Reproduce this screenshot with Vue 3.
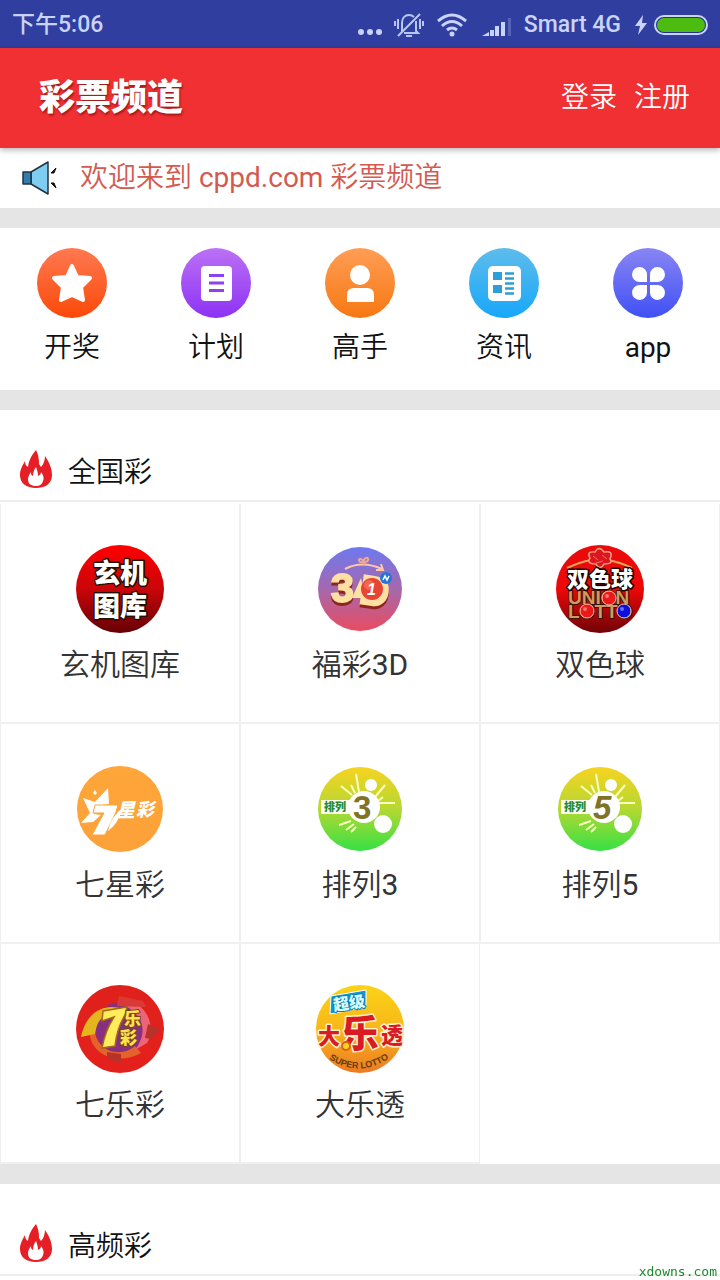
<template>
  <div class="page">
    <div class="status-bar">
      <span>下午5:06</span>
      <div class="status-right">
        <svg width="24" height="24" viewBox="0 0 24 24" fill="#c9d3fb">
          <circle cx="3" cy="19" r="3" /><circle cx="12" cy="19" r="3" /><circle cx="21" cy="19" r="3" />
        </svg>
        <svg class="bell" width="30" height="26" viewBox="0 0 30 26" fill="none" stroke="#b9c6f5" stroke-width="2">
          <path d="M8 20V11C8 6 11 3 15 3C17 3 19 4 20 5M22 9V19L24 21H10M12 24H18" />
          <path d="M4 24L26 2M1 9V14M4 7V17M26 7V17M29 9V14" />
        </svg>
        <svg class="wifi" width="32" height="24" viewBox="0 0 32 24" fill="none" stroke="#c9d3fb" stroke-width="3">
          <path d="M2 8Q16 -4 30 8M6 13Q16 4 26 13M11 17Q16 13 21 17" />
          <circle cx="16" cy="21" r="2.500" fill="#c9d3fb" stroke="none" />
        </svg>
        <svg class="signal" width="30" height="20" viewBox="0 0 30 20" fill="#c9d3fb">
          <path d="M0 19L7 15V19ZM8 13H12V19H8ZM13 9H17V19H13ZM19 5H23V19H19Z" />
          <path d="M26 1H29V19H26Z" fill="#5663b8" />
        </svg>
        <span>Smart 4G</span>
        <svg class="bolt" width="12" height="20" viewBox="0 0 12 20" fill="#c9d3fb">
          <path d="M8 0L0 11H5L3 20L12 8H7Z" />
        </svg>
        <svg width="54" height="20" viewBox="0 0 54 20">
          <rect x="1" y="1" width="52" height="18" rx="9" fill="#23308c" stroke="#c9d3fb" stroke-width="2" />
          <rect x="3" y="3" width="48" height="14" rx="7" fill="#4cbc10" />
        </svg>
      </div>
    </div>

    <header class="header">
      <h1>彩票频道</h1>
      <div class="user-links">
        <a href="#login">登录</a>
        <a href="#register">注册</a>
      </div>
    </header>

    <div class="notice">
      <svg width="38" height="36" viewBox="0 0 38 36" stroke="#24343d" stroke-width="1.5" stroke-linejoin="round">
        <path d="M10 12L27 2V34L10 24Z" fill="#7fcdf0" />
        <rect x="2" y="12" width="8" height="12" fill="#2f7fae" />
        <path d="M30 13L35 8L33 13ZM30 23L35 28L33 23Z" fill="#111" stroke="#111" stroke-width="1" />
      </svg>
      <p>欢迎来到 cppd.com 彩票频道</p>
    </div>

    <nav class="quick-nav">
      <a v-for="item in menu" :key="item.id" :href="'#' + item.id">
        <svg width="70" height="70" viewBox="0 0 70 70">
          <defs>
            <linearGradient :id="'menu-' + item.id" x1="0" y1="0" x2="0" y2="1">
              <stop offset="0" :stop-color="item.from" />
              <stop offset="1" :stop-color="item.to" />
            </linearGradient>
          </defs>
          <circle cx="35" cy="35" r="35" :fill="`url(#menu-${item.id})`" />
          <path v-if="item.id === 'draw'" d="M35 18L40 29L53 30L44 39L46 52L35 47L24 52L26 39L17 30L30 29Z" fill="#fff" stroke="#fff" stroke-width="4" stroke-linejoin="round" />
          <g v-else-if="item.id === 'plan'">
            <rect x="20" y="18" width="31" height="35" rx="4" fill="#fff" />
            <path d="M28 27.500H43M28 35H43M28 42.500H43" stroke="#8e41ee" stroke-width="3" />
          </g>
          <g v-else-if="item.id === 'expert'" fill="#fff">
            <circle cx="35" cy="27" r="10" />
            <path d="M22 54V47Q22 40 29 40H42Q49 40 49 47V54Z" />
          </g>
          <g v-else-if="item.id === 'news'">
            <rect x="19" y="18" width="33" height="35" rx="5" fill="#fff" />
            <path d="M24 24H33V32H24ZM24 37H33V45H24Z" fill="#2b9fd8" />
            <path d="M36 25.500H45M36 30.500H45M36 35.500H45M36 40.500H45M36 45.500H45" stroke="#2b9fd8" stroke-width="2.500" />
          </g>
          <g v-else fill="#fff">
            <path d="M34 34H26A7.500 7.500 0 1 1 34 26.500ZM37 34V26.500A7.500 7.500 0 1 1 45 34ZM34 37V45A7.500 7.500 0 1 1 26 37ZM37 37H45A7.500 7.500 0 1 1 37 45Z" />
          </g>
        </svg>
        <span>{{ item.name }}</span>
      </a>
    </nav>

    <section v-for="section in sections" :key="section.title" class="section">
      <h2>
        <svg width="34" height="40" viewBox="0 0 34 40">
          <path d="M17 0C19 4 20 8 20 14L22 17C25 14 26 9 26 6C30 12 33 18 33 25C33 34 26 38 17 38C7 38 1 33 1 25C1 19 4 15 6 11C6 14 7 16 9 17C10 10 12 6 17 0Z" fill="#e51f25" />
          <path d="M17 17C18 20 19 22 19 26C21 25 22 24 22 22C25 26 25 29 24 31C23 35 20 36 17 36C12 36 9 34 9 29C9 27 10 25 12 22C12 24 12 25 14 26C14 22 15 20 17 17Z" fill="#fff" />
        </svg>
        <span>{{ section.title }}</span>
      </h2>
      <div class="grid">
        <a v-for="game in section.games" :key="game.id" class="game" :href="'#' + game.id">
          <svg width="90" height="90" viewBox="0 0 90 90">
            <defs>
              <linearGradient :id="'game-' + game.id" x1="0" y1="0" x2="0" y2="1">
                <stop v-for="(color, i) in game.colors" :key="i" :offset="i / (game.colors.length - 1)" :stop-color="color" />
              </linearGradient>
            </defs>
            <circle cx="45" cy="45" :r="game.r" :fill="`url(#game-${game.id})`" />

            <g v-if="game.id === 'xjtk'" class="heavy outlined" font-size="27" fill="#fff" stroke="#210" stroke-width="3">
              <text x="18" y="39">玄机</text>
              <text x="18" y="72">图库</text>
            </g>

            <g v-else-if="game.id === 'fc3d'">
              <path d="M30 25Q47 16 67 25M66 20L68 26L61 26" fill="none" stroke="#ffc6a5" stroke-width="2" />
              <path d="M49 18C43 10 42 20 48 18C51 9 57 17 50 18L49 21" fill="none" stroke="#f3a895" stroke-width="2" />
              <g class="latin embossed" font-size="41" fill="#ffdfa2" stroke="#ffdfa2" stroke-width="2">
                <text x="16" y="58">3</text>
                <text x="45" y="61" transform="rotate(8 58 46)">D</text>
              </g>
              <path d="M37 54L46 34L50 54Z" fill="#ffdfa2" />
              <circle cx="57" cy="45" r="11" fill="#e84436" />
              <circle cx="54" cy="41" r="5" fill="#ff7b62" opacity=".6" />
              <text class="latin slanted" x="52" y="51" font-size="16" fill="#fff">1</text>
              <circle cx="71" cy="34" r="6" fill="#2576d2" />
              <path d="M68 36L70 32L72 36L74 32" fill="none" stroke="#fff" stroke-width="1.500" />
            </g>

            <g v-else-if="game.id === 'ssq'">
              <path d="M12 24Q25 18 36 16M52 16Q65 18 77 24" fill="none" stroke="#e9a64f" stroke-width="2" />
              <path d="M40 8Q44 1 49 8Q59 6 55 15Q59 20 49 20Q45 27 41 20Q31 20 35 14Q31 7 40 8Z" fill="#db1620" stroke="#f2a084" stroke-width="1.500" />
              <path d="M38 12L43 16M47 11L52 15M41 19L48 17" stroke="#f47456" />
              <g class="latin outlined" fill="#d29a5c" stroke="#3d1209" stroke-width="2">
                <text x="13" y="60" font-size="19">UNION</text>
                <text x="13" y="74" font-size="19">LOTTO</text>
              </g>
              <g stroke="#f7c49a">
                <circle cx="54" cy="54" r="7" fill="#ed171b" />
                <circle cx="32" cy="67" r="7" fill="#ed171b" />
                <circle cx="69" cy="67" r="7" fill="#0b10dc" />
              </g>
              <circle cx="52" cy="52" r="2" fill="#fa7a6e" />
              <circle cx="30" cy="65" r="2" fill="#fa7a6e" />
              <circle cx="67" cy="65" r="2" fill="#6a70ff" />
              <text class="heavy outlined" x="12" y="43" font-size="22" fill="#fff" stroke="#1a0503" stroke-width="3">双色球</text>
            </g>

            <g v-else-if="game.id === 'qxc'" fill="#fff">
              <path d="M33 24L34 40L20 42L19 50L26 51L18 58L6 59L15 49L8 34L20 38Z" />
              <path d="M20 26L22 29L20 31L18 29Z" />
              <path d="M20 41H43L41 48L30 71H17L29 49H18Z" stroke="#fba637" />
              <path d="M33 67Q36 52 48 44Q43 60 33 67Z" />
              <text class="heavy slanted" x="41" y="53" font-size="19">星</text>
              <text class="heavy slanted" x="61" y="52" font-size="18">彩</text>
            </g>

            <g v-else-if="game.id === 'pl3' || game.id === 'pl5'">
              <path d="M41 10L44 28M26 22L37 31M36 21L40 29M60 33L70 21M63 37L68 33M64 39H80M36 57L24 61M39 60L31 66M41 63L36 68" stroke="#faffbd" stroke-width="2" />
              <path d="M6 36H38V50H6Z" fill="#fffdf0" />
              <circle cx="49" cy="43" r="16" fill="#fff" />
              <circle cx="56" cy="21" r="6" fill="#fff" />
              <circle cx="68" cy="60" r="9" fill="#fff" />
              <text class="heavy" x="9" y="47" font-size="11" fill="#258b36">排列</text>
              <text v-if="game.id === 'pl3'" class="latin" x="38" y="55" font-size="33" fill="#807326">3</text>
              <text v-else class="latin slanted" x="38" y="55" font-size="33" fill="#807326">5</text>
            </g>

            <g v-else-if="game.id === 'qlc'">
              <circle cx="46" cy="44" r="26" fill="#873080" />
              <path d="M20 43C18 65 44 76 60 62L66 69C39 84 8 67 16 39Z" fill="#e6622b" />
              <path d="M6 53C12 25 32 19 48 25L37 32C24 31 22 40 20 50Z" fill="#e5b51e" />
              <path d="M42 18C62 9 85 37 72 59L60 66C77 43 63 26 42 18Z" fill="#ee6477" />
              <path d="M44 12L68 17L71 23L42 22Z" fill="#d93a35" />
              <path d="M73 40L85 45L76 55L70 54ZM32 68L46 70L46 79L32 75Z" fill="#b8322a" />
              <path d="M28 27L52 23L50 31Q42 44 40 62L27 64Q30 47 39 33L27 37Z" fill="#ffec5a" stroke="#a46817" stroke-width="1.500" />
              <g class="heavy outlined" font-size="17" fill="#ffe34c" stroke="#794518" stroke-width="2">
                <text x="49" y="41">乐</text>
                <text x="45" y="60">彩</text>
              </g>
            </g>

            <g v-else>
              <path d="M16 12L51 6V23L15 30Z" fill="#1596d1" stroke="#fff" />
              <text class="heavy outlined" x="18" y="25" font-size="16" fill="#d9ffff" stroke="#087fb9" stroke-width="2" transform="rotate(-8 33 19)">超级</text>
              <g class="heavy outlined" fill="#d91b24" stroke="#fff1cc" stroke-width="3">
                <text x="3" y="60" font-size="22">大</text>
                <text x="66" y="59" font-size="22">透</text>
                <text x="26" y="63" font-size="38">乐</text>
              </g>
              <circle cx="31" cy="62" r="4" fill="#ffd51b" stroke="#d76018" stroke-width="2" />
              <path id="lotto-arc" d="M14 75Q45 95 76 73" fill="none" />
              <text class="latin" font-size="9" fill="#653c08"><textPath href="#lotto-arc">SUPER LOTTO</textPath></text>
            </g>
          </svg>
          <span>{{ game.name }}</span>
        </a>
      </div>
    </section>
    <div class="watermark">xdowns.com</div>
  </div>
</template>

<script setup>
// Accesos rápidos
const menu = [
  { id: 'draw', name: '开奖', from: '#ff7950', to: '#fb4909' },
  { id: 'plan', name: '计划', from: '#bb71f5', to: '#8c32f4' },
  { id: 'expert', name: '高手', from: '#ff9d55', to: '#f77813' },
  { id: 'news', name: '资讯', from: '#5ebcea', to: '#18a7fa' },
  { id: 'app', name: 'app', from: '#8985f3', to: '#3f50f4' }
];

const sections = [
  {
    title: '全国彩',
    games: [
      { id: 'xjtk', name: '玄机图库', r: 44, colors: ['#ff0000', '#c90609', '#650006'] },
      { id: 'fc3d', name: '福彩3D', r: 42, colors: ['#6d79f0', '#a568ad', '#e94c60'] },
      { id: 'ssq', name: '双色球', r: 44, colors: ['#e90b0d', '#ed0808', '#700307'] },
      { id: 'qxc', name: '七星彩', r: 43, colors: ['#ffa63a', '#fca138'] },
      { id: 'pl3', name: '排列3', r: 42, colors: ['#f7d321', '#b4d832', '#36e044'] },
      { id: 'pl5', name: '排列5', r: 42, colors: ['#f7d321', '#b4d832', '#36e044'] },
      { id: 'qlc', name: '七乐彩', r: 44, colors: ['#df211b', '#e4201d'] },
      { id: 'dlt', name: '大乐透', r: 44, colors: ['#fbd315', '#f8b71a', '#ed7924'] }
    ]
  },
  { title: '高频彩', games: [] }
];
</script>

<style>
body { background: #fff; }
</style>

<style scoped>
.page { min-height: 100vh; color: #111; font-family: Roboto, "Noto Sans CJK SC DemiLight", "Noto Sans CJK SC", sans-serif; font-size: 28px; line-height: 40px; overflow: hidden; }
a { color: inherit; text-decoration: none; }
svg { display: block; flex: none; }

.status-bar { height: 48px; box-sizing: border-box; padding: 2px 12px 0; display: flex; align-items: center; justify-content: space-between; background: #303f9f; color: #c9d3fb; font-family: Roboto, "Noto Sans CJK SC", sans-serif; font-size: 23px; font-weight: 500; }
.status-right { display: flex; align-items: center; }
.bell { margin-left: 12px; }
.wifi { margin-left: 12px; }
.signal { margin: 4px 12px 0 14px; }
.bolt { margin: 0 7px 0 14px; }

.header { position: relative; height: 100px; box-sizing: border-box; padding: 0 30px 0 39px; display: flex; align-items: center; justify-content: space-between; background: #f03033; color: #fff; box-shadow: 0 2px 6px rgba(0, 0, 0, 0.3); }
h1 { margin: 0; font-family: Roboto, "Noto Sans CJK SC", sans-serif; font-size: 36px; font-weight: 900; text-shadow: 1px 2px 2px rgba(90, 0, 0, 0.5); }
.user-links { display: flex; gap: 17px; }

.notice { height: 60px; box-sizing: border-box; padding: 0 21px; display: flex; align-items: center; gap: 21px; color: #d45a50; }
.notice p { margin: 0; }

.quick-nav { display: flex; padding: 20px 0 22px; border-top: 20px solid #e5e5e5; }
.quick-nav a { flex: 1; display: flex; flex-direction: column; align-items: center; gap: 10px; }

.section { border-top: 20px solid #e5e5e5; }
h2 { margin: 0; padding: 40px 0 4px 19px; display: flex; align-items: flex-start; gap: 15px; border-bottom: 2px solid #eee; font-size: 28px; line-height: 46px; font-weight: 400; }
.grid { display: grid; grid-template-columns: repeat(3, 1fr); padding-top: 2px; }
.game { height: 220px; box-sizing: border-box; padding-top: 40px; display: flex; flex-direction: column; align-items: center; gap: 11px; border: solid #f0f0f0; border-width: 0 1px 2px; color: #333; font-size: 30px; }

.heavy { font-family: "Noto Sans CJK SC", sans-serif; font-weight: 900; }
.latin { font-family: "Liberation Sans", sans-serif; font-weight: 700; }
.slanted { font-style: italic; }
.outlined { paint-order: stroke; stroke-linejoin: round; }
.embossed { filter: drop-shadow(0 3px 0 #8d251c); }

.watermark { position: fixed; right: 3px; bottom: 0; color: #1c8a2c; font: 13px/16px "DejaVu Sans Mono", monospace; }
</style>
